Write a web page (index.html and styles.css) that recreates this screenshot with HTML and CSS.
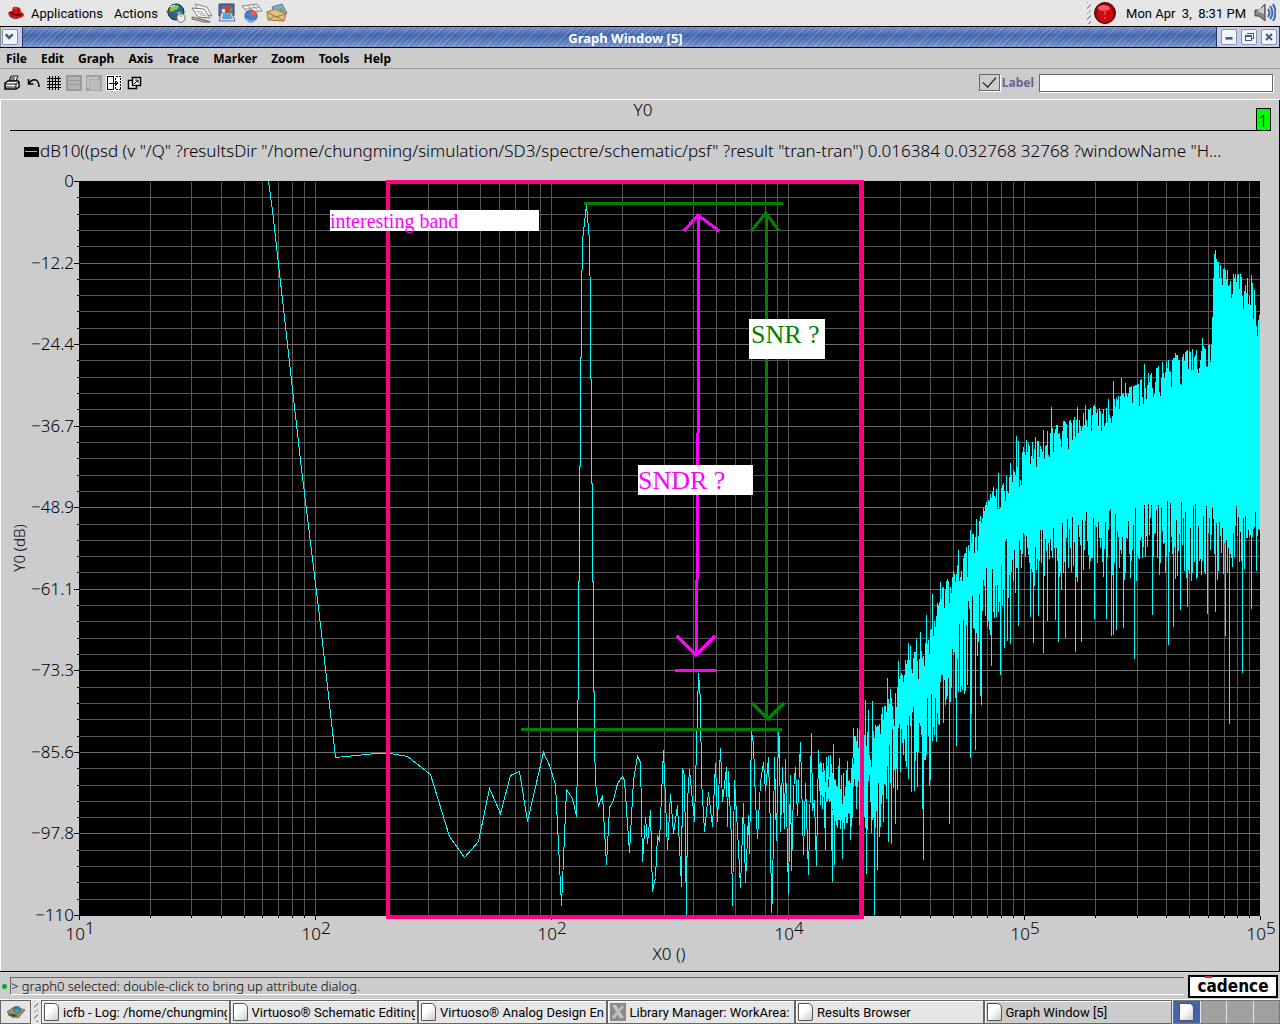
FILE: index.html
```html
<!DOCTYPE html>
<html lang="en">
<head>
<meta charset="utf-8">
<title>Graph Window [5]</title>
<link rel="stylesheet" href="styles.css">
<script src="plot.js" defer></script>
</head>
<body>
<header class="panel">
  <svg class="hat" viewBox="0 0 18 14" aria-hidden="true"><path d="M1 7q1-2 4-2l1-4q3-1 7 1l1 4q3 1 3 3q-1 3-6 3Q3 12 1 7z" fill="#d01010"/><path d="M4 6q4 3 9 2l2 1q-7 2-11-1z" fill="#400"/><path d="M1 8q4 5 12 4l-3 1Q3 13 1 8z" fill="#222"/><path d="M7 2l3 0" stroke="#f66"/></svg>
  <a class="panel-link" href="#apps">Applications</a>
  <a class="panel-link actions" href="#actions">Actions</a>
  <nav class="launchers" aria-label="Launchers">
    <button class="flat" aria-label="Web browser"><svg viewBox="0 0 22 20"><circle cx="10" cy="9" r="8" fill="#2468a8" stroke="#123"/><path d="M6 3q5-2 7 0q-1 4-4 4q-3 3-6 0zM11 9q3-1 5 1q-2 3-4 2z" fill="#8cc63c"/><path d="M4 4l5-2" stroke="#fff"/><path d="M1 8q5 6 11 5" fill="none" stroke="#555" stroke-width="2"/><ellipse cx="15" cy="15" rx="4" ry="4.500" fill="#eee" stroke="#777"/><path d="M15 11v3" stroke="#777"/></svg></button>
    <button class="flat" aria-label="Word processor"><svg viewBox="0 0 22 20"><path d="M4 1l12 3 5 9-12-3z" fill="#f4f4f4" stroke="#888"/><path d="M1 5l12 1 6 9-12-1z" fill="#fff" stroke="#777"/><path d="M5 8l7 1M7 10l7 1M9 12l7 1" stroke="#aaa"/><path d="M1 14l13 3 5 2-6 0L1 16z" fill="#cb8" stroke="#666"/></svg></button>
    <button class="flat" aria-label="Presentation"><svg viewBox="0 0 22 20"><path d="M3 1h15v12H3z" fill="#5868a8" stroke="#345"/><path d="M6 12V6h3v6z" fill="#e8e8e8"/><path d="M10 12V3h3v9z" fill="#e04020"/><path d="M14 12V5h2v7z" fill="#50a040"/><path d="M5 10h11l3 8H3z" fill="#ddd" stroke="#678"/><path d="M7 11h8l1 5H6z" fill="#58a0e0"/></svg></button>
    <button class="flat" aria-label="Spreadsheet"><svg viewBox="0 0 22 20"><path d="M1 3l15-2 5 7-14 2z" fill="#f4f4f4" stroke="#888"/><path d="M4 6l14-2M7 2l5 7M12 2l5 6" stroke="#999"/><circle cx="10" cy="13" r="6" fill="#4a80d0" stroke="#357"/><path d="M10 13V7a6 6 0 0 1 6 5z" fill="#e86030"/><path d="M5 16q4 4 9 1" stroke="#cde" fill="none"/></svg></button>
    <button class="flat" aria-label="Mail"><svg viewBox="0 0 22 20"><path d="M6 4l10-3 5 9-12 3z" fill="#7db0d8" stroke="#678"/><path d="M12 4l6 2-2 4z" fill="#7a5"/><path d="M1 9l8-3 11 5-2 7-16-1z" fill="#e0c088" stroke="#a07830"/><path d="M1 9l9 5 10-3M2 17l7-4 9 5" fill="none" stroke="#a07830"/></svg></button>
  </nav>
  <div class="tray">
    <span class="grip" aria-hidden="true"></span>
    <svg class="alert" viewBox="0 0 22 22" aria-hidden="true"><circle cx="11" cy="11" r="10.500" fill="#a00008" stroke="#500"/><circle cx="11" cy="12" r="8" fill="#c80c10"/><ellipse cx="10" cy="6" rx="6" ry="3" fill="#e86060"/><path d="M11 8v5" stroke="#e33" stroke-width="2"/><circle cx="11" cy="16" r="1" fill="#f44"/></svg>
    <time class="clock">Mon Apr&nbsp; 3,&nbsp; 8:31 PM</time>
    <svg class="volume" viewBox="0 0 22 20" aria-hidden="true"><path d="M1 7h4l6-6v17l-6-5H1z" fill="#888" stroke="#444"/><path d="M3 8l7-5v8z" fill="#ccc"/><path d="M14 6q3 4 0 8M16 3q5 7 0 13M19 1q5 9 0 17" fill="none" stroke="#3a68a8" stroke-width="2"/></svg>
  </div>
</header>

<div class="titlebar">
  <div class="frame-end"><button class="frame-btn" aria-label="Window menu"><svg viewBox="0 0 16 14"><path d="M3 4l4 4 4-4" fill="none" stroke="#4a5a8a" stroke-width="3"/></svg></button></div>
  <h1 class="title">Graph Window [5]</h1>
  <div class="frame-end">
    <button class="frame-btn" aria-label="Minimize"><svg viewBox="0 0 16 14"><path d="M4 7h8v3H4z" fill="#4a5a8a"/></svg></button>
    <button class="frame-btn" aria-label="Restore"><svg viewBox="0 0 14 14" shape-rendering="crispEdges"><path d="M3 5h6v5H3zM5 3h6v5h-2M3 6h6" fill="none" stroke="#4a5a8a"/></svg></button>
    <button class="frame-btn" aria-label="Close"><svg viewBox="0 0 14 14"><path d="M4 4l6 6M10 4l-6 6" stroke="#4a5a8a" stroke-width="2"/></svg></button>
  </div>
</div>

<nav class="menubar" aria-label="Menu">
  <button class="menu">File</button><button class="menu">Edit</button><button class="menu">Graph</button><button class="menu">Axis</button><button class="menu">Trace</button><button class="menu">Marker</button><button class="menu">Zoom</button><button class="menu">Tools</button><button class="menu">Help</button>
</nav>

<div class="toolbar">
  <div class="tools">
    <button class="flat print" aria-label="Print"><svg viewBox="0 0 16 16"><path d="M5 6l2-5h7l-2 5" fill="#fff" stroke="#000"/><path d="M1 8l3-2h10l1 1v5l-3 2H1z" fill="#fff" stroke="#000" stroke-width="1.500"/><path d="M1 9h11l3-2M12 9v5M7 3h4M6 5h5M1 12h11" stroke="#000" fill="none"/><path d="M7 11h3" stroke="#fe0"/></svg></button>
    <button class="flat" aria-label="Undo"><svg viewBox="0 0 16 16"><path d="M2.500 4v5h5M3 8q3-4 7-3q3 2 3 7" fill="none" stroke="#000" stroke-width="1.500"/></svg></button>
    <button class="flat" aria-label="Grid"><svg viewBox="0 0 16 16"><path d="M1 3.500h14M1 6.500h14M1 9.500h14M1 12.500h14M3.500 1v14M6.500 1v14M9.500 1v14M12.500 1v14" stroke="#000" shape-rendering="crispEdges"/></svg></button>
    <button class="flat" aria-label="Strips" disabled><svg viewBox="0 0 16 16" shape-rendering="crispEdges"><path d="M0 0h16v16H0z" fill="#999"/><path d="M2 2h12v3H2zM2 6h12v3H2zM2 10h12v4H2z" fill="#b4b4b4"/></svg></button>
    <button class="flat" aria-label="Cards" disabled><svg viewBox="0 0 16 16" shape-rendering="crispEdges"><path d="M0 0h16v16H0z" fill="#a0a0a0"/><path d="M1 2h11v11H1z" fill="#c4c4c4"/><path d="M3 4h11v11H3z" fill="#bbb" stroke="#aaa"/></svg></button>
    <button class="flat" aria-label="Split"><svg viewBox="0 0 16 16" shape-rendering="crispEdges"><path d="M0 0h16v16H0z" fill="#fff"/><path d="M1.500 1.500h6v13h-6zM3 8h9M10 6l2 2-2 2" fill="none" stroke="#000"/><path d="M9.500 1.500h5v13h-5z" fill="none" stroke="#000" stroke-dasharray="2 1"/></svg></button>
    <button class="flat" aria-label="New window"><svg viewBox="0 0 16 16"><path d="M2.500 5.500h8v8h-8z" fill="#fff" stroke="#000" stroke-width="1.500"/><path d="M6.500 2.500h8v8h-8z" fill="#fff" stroke="#000" stroke-width="1.500"/><path d="M8 9l4-4M9 5h3v3" fill="none" stroke="#000"/></svg></button>
  </div>
  <div class="label-box">
    <input class="tick" type="checkbox" id="lbl" checked>
    <label for="lbl">Label</label>
    <input class="label-text" type="text" aria-label="Label text">
  </div>
</div>

<main class="graph">
  <svg class="chart" viewBox="0 100 1280 871" role="img" aria-label="Power spectral density plot">
    <path class="rule" d="M10 130.500H1256"/>
    <rect class="tab" x="1256.500" y="108.500" width="14" height="22"/>
    <text class="txt" x="1263" y="127" text-anchor="middle">1</text>
    <text class="txt" x="643" y="116" text-anchor="middle">Y0</text>
    <rect x="24" y="147" width="15" height="10"/>
    <path class="trace" d="M25 151.500h12"/>
    <text class="txt" x="40" y="157">dB10((psd (v "/Q" ?resultsDir "/home/chungming/simulation/SD3/spectre/schematic/psf" ?result "tran-tran") 0.016384 0.032768 32768 ?windowName "H...</text>
    <rect x="79" y="181" width="1181" height="735"/>
    <g id="grid"></g>
    <g id="axes"></g>
    <text class="txt" x="669" y="960" text-anchor="middle">X0 ()</text>
    <text class="txt small" transform="translate(25 548) rotate(-90)" text-anchor="middle">Y0 (dB)</text>
    <path id="low" class="trace" d=""/>
    <path id="high" class="trace" d=""/>
    <rect class="band" x="388" y="182" width="474" height="735"/>
    <g class="note green">
      <path d="M584 203.500H783M521 729.500H782M766.500 213V719M751 231L766 213L779 231M752 703L768 719L784 703"/>
      <rect x="749" y="319" width="76" height="40"/>
      <text x="751" y="343">SNR ?</text>
    </g>
    <g class="note magenta">
      <path d="M675 670.500H716M698.500 215V362L696.500 655M684 231L698 215L719 231M677 636L696 655L715 636"/>
      <rect x="638" y="465" width="115" height="30"/>
      <text x="638" y="489">SNDR ?</text>
      <rect x="330" y="210" width="209" height="21"/>
      <text class="band-name" x="330" y="228">interesting band</text>
    </g>
  </svg>
</main>

<div class="status">
  <span class="lamp" aria-hidden="true"></span>
  <output class="message">&gt; graph0 selected: double-click to bring up attribute dialog.</output>
  <svg class="brand" viewBox="0 0 90 24" role="img" aria-label="cadence"><rect x="1" y="2" width="88" height="21" fill="#fff" stroke="#000" stroke-width="2"/><text x="45" y="18" text-anchor="middle">cadence</text><path d="M17 2h7v2h-7z" fill="#e02020"/></svg>
</div>

<footer class="taskbar">
  <button class="desk" aria-label="Show desktop"><svg viewBox="0 0 20 16"><path d="M1 8l7-5 11 3-7 8z" fill="#b09050" stroke="#765"/><circle cx="11" cy="6" r="4" fill="#3878c8"/><path d="M7 9l4-4 3 1-4 5z" fill="#5a4"/><path d="M2 10l6 3 3-2" stroke="#567" stroke-width="2"/></svg></button>
  <span class="grip" aria-hidden="true"></span>
  <div class="tasks">
    <button class="task"><i class="doc"></i><span>icfb - Log: /home/chungming</span></button>
    <button class="task"><i class="doc"></i><span>Virtuoso® Schematic Editing</span></button>
    <button class="task"><i class="doc"></i><span>Virtuoso® Analog Design En</span></button>
    <button class="task"><svg class="x11" viewBox="0 0 16 18" aria-hidden="true"><path d="M0 0h16v18H0z" fill="#8a8a8a"/><path d="M2 2h4l8 13h-4z" fill="#c8c8c8"/><path d="M13 3L3 15" stroke="#c8b8b8" stroke-width="3"/></svg><span>Library Manager: WorkArea:</span></button>
    <button class="task"><i class="doc"></i><span>Results Browser</span></button>
    <button class="task active"><i class="doc"></i><span>Graph Window [5]</span></button>
  </div>
  <div class="pager">
    <button class="desktop current" aria-label="Desktop 1"><i class="doc"></i></button><button class="desktop" aria-label="Desktop 2"></button><button class="desktop" aria-label="Desktop 3"></button><button class="desktop" aria-label="Desktop 4"></button>
  </div>
</footer>
</body>
</html>
```
FILE: styles.css
```css
* { box-sizing: border-box; }
body { margin: 0; min-height: 100vh; display: flex; flex-direction: column; background: #ccc; color: #000; font-family: Roboto, "Liberation Sans", sans-serif; font-size: 13px; }
button { margin: 0; padding: 0; border: 0; background: none; color: inherit; font: inherit; }
svg { display: block; }

.panel { height: 27px; display: flex; align-items: center; padding: 0 4px 0 7px; background: #e6e6e6; border-bottom: 1px solid #000; }
.hat { width: 18px; height: 14px; margin-right: 6px; }
.panel-link { color: #000; text-decoration: none; }
.actions { margin: 0 8px 0 11px; }
.launchers { display: flex; gap: 3px; }
.launchers svg { width: 22px; height: 20px; }
.tray { margin-left: auto; display: flex; align-items: center; }
.grip { width: 4px; height: 22px; margin-right: 3px; background: repeating-linear-gradient(135deg, #999 0 1px, #e6e6e6 1px 4px); }
.alert { width: 22px; height: 22px; margin-right: 10px; }
.clock { margin-right: 8px; }
.volume { width: 22px; height: 20px; }

.titlebar { height: 21px; display: flex; align-items: stretch; border-bottom: 1px solid #000; background: repeating-linear-gradient(135deg, #00003018 0 1px, #ffffff28 1px 2px, transparent 2px 4px), linear-gradient(#7a96d0, #4468ae 40%, #5a7cbc 70%, #7d99cd); }
.frame-end { display: flex; align-items: center; gap: 4px; padding: 0 2px 0 4px; background: #c5cee6; border-right: 1px solid #24376b; border-left: 1px solid #24376b; }
.frame-end:first-child { padding: 0 4px 0 1px; border-left-color: #888; }
.frame-btn { width: 16px; height: 16px; background: #f2f4fb; border: 1px solid #8993b0; border-radius: 2px; }
.frame-btn svg { width: 14px; height: 14px; }
.title { flex: 1; margin: 0; padding-left: 12px; font: bold 13px/22px "Noto Sans", sans-serif; text-align: center; color: #fff; }

.menubar { height: 21px; display: flex; align-items: center; gap: 14px; padding: 1px 6px 0; border-bottom: 1px solid #999; }
.menu { font: bold 12px/20px "Noto Sans", sans-serif; }

.toolbar { height: 30px; display: flex; justify-content: space-between; align-items: center; padding: 0 7px 3px 4px; }
.tools { display: flex; gap: 4px; }
.tools svg { width: 16px; height: 16px; }
.print { margin-right: 2px; }
.label-box { display: flex; align-items: center; color: #669; font: bold 12px/16px "Noto Sans", sans-serif; }
.tick { appearance: none; width: 21px; height: 17px; margin: 0 2px 0 0; border: 1px solid #666; box-shadow: 1px 1px #fff; display: grid; place-items: center; }
.tick:checked::after { content: ""; width: 12px; height: 6px; border: solid #000; border-width: 0 0 1px 1px; transform: translateY(-2px) rotate(-48deg); }
.label-text { width: 234px; height: 18px; margin: 0 0 0 5px; padding: 0 3px; border: 1px solid #666; box-shadow: 1px 1px #fff; background: #fff; }

.graph { border-top: 1px solid #fff; border-bottom: 1px solid #000; box-shadow: inset 1px 0 #fff, inset -1px 0 #000; }
.chart { width: 100%; height: auto; }
.txt { font: 300 17px "Noto Sans", sans-serif; }
.txt.small { font-size: 15px; }
.rule, .axis { stroke: #000; fill: none; shape-rendering: crispEdges; }
.tab { fill: #0f0; stroke: #000; }
.grid-line { stroke: #555; fill: none; shape-rendering: crispEdges; }
.grid-line.major { stroke: #707070; }
.trace { stroke: #0ff; fill: none; shape-rendering: crispEdges; }
.band { fill: none; stroke: #ff0080; stroke-width: 4px; }
.note path { fill: none; stroke-width: 3px; shape-rendering: crispEdges; }
.note rect { fill: #fff; }
.note text { font: 26px "Liberation Serif", serif; }
.note .band-name { font-size: 20px; }
.green path { stroke: #008000; }
.green text { fill: #008000; }
.magenta path { stroke: #f0f; }
.magenta text { fill: #f0f; }

.status { min-height: 27px; flex: 1 0 auto; display: flex; align-items: center; padding: 0 2px; border-top: 1px solid #d8e0d8; }
.lamp { width: 5px; height: 5px; border-radius: 3px; background: #00b020; margin-right: 3px; }
.message { flex: 1; height: 18px; margin-right: 4px; font: 300 13px/16px "Noto Sans", sans-serif; border: solid; border-width: 1px 0 1px 1px; border-color: #666 #fff #fff #666; }
.brand { width: 90px; height: 24px; }
.brand text { font: bold 17px "DejaVu Sans Condensed", sans-serif; }

.taskbar { height: 25px; display: flex; align-items: stretch; background: #e6e6e6; border-top: 1px solid #fff; overflow: hidden; }
.desk { width: 31px; border: 1px solid #666; display: grid; place-items: center; }
.desk svg { width: 20px; height: 16px; }
.taskbar .grip { margin: 1px 3px; height: 21px; }
.tasks { flex: 1; min-width: 0; display: flex; }
.task { flex: 1 1 0; min-width: 0; display: flex; align-items: center; gap: 4px; padding: 0 2px; text-align: left; border: 1px solid #666; box-shadow: inset 1px 1px #fff; }
.task span { overflow: hidden; white-space: nowrap; }
.task.active { background: #ccc; }
.doc { flex: none; width: 15px; height: 18px; border: 1px solid #555; border-radius: 1px 5px 1px 1px; background: linear-gradient(135deg, #fff 40%, #ccc); }
.x11 { flex: none; width: 16px; height: 18px; }
.pager { width: 107px; margin-left: 1px; display: flex; gap: 1px; border: 1px solid #777; background: #e6e6e6; }
.desktop { flex: 1; background: #a0a0a0; display: grid; place-items: center; }
.current { background: #4464a8; }
```
FILE: plot.js
```javascript
const NS = "http://www.w3.org/2000/svg";
const left = 79, right = 1260, top0 = 181, bottom = 915;
const add = (parent, name, attrs, text) => {
  const el = document.createElementNS(NS, name);
  for (const k in attrs) el.setAttribute(k, attrs[k]);
  if (text) el.textContent = text;
  document.getElementById(parent).append(el);
  return el;
};

// Horizontal grid: nine major divisions, five minor steps in each.
const yNames = ["0", "−12.2", "−24.4", "−36.7", "−48.9", "−61.1", "−73.3", "−85.6", "−97.8", "−110"];
let minor = "", major = "", ticks = "M79.5 181V916M79 915.5H1260";
for (let i = 0; i <= 45; i++) {
  const y = Math.round(top0 + (bottom - top0) * i / 45) + 0.5;
  const isMajor = i % 5 === 0;
  if (i > 0 && i < 45) {
    if (isMajor) major += `M80 ${y}H${right}`; else minor += `M80 ${y}H${right}`;
  }
  ticks += `M${isMajor ? 74 : 77} ${y}H79`;
  if (isMajor) add("axes", "text", { class: "txt", x: 74, y: y + 5.5, "text-anchor": "end" }, yNames[i / 5]);
}
// Vertical grid: five decades on a log scale.
const powers = ["1", "2", "2", "4", "5", "5"];
const decade = 236.35;
for (let d = 0; d <= 5; d++) {
  for (let m = 1; m < (d < 5 ? 10 : 2); m++) {
    const x = Math.floor(left + decade * (d + Math.log10(m))) + 0.5;
    if (x > 80 && x < 1260) minor += `M${x} ${top0 + 1}V${bottom}`;
    ticks += `M${x} 916V${m === 1 ? 920 : 918}`;
    if (m === 1) {
      const label = add("axes", "text", { class: "txt", x: x - 14, y: 940 }, "10");
      const sup = document.createElementNS(NS, "tspan");
      sup.setAttribute("dy", -6);
      sup.textContent = powers[d];
      label.append(sup);
    }
  }
}
add("grid", "path", { class: "grid-line", d: minor });
add("grid", "path", { class: "grid-line major", d: major });
add("axes", "path", { class: "axis", d: ticks });

// Spectrum below the noise-shaped region.
const low = [268,181,272,210,300,460,320,624,335,757,376,753,390,753,407,756,430,774,449,836,464,857,478,841,489,788,500,813,510,775,519,771,527,821,543,752,549,765,555,784,561,905,566,789,572,798,576,816,577,758,578,645,579,520,580,415,581,301,582,240,586,204,589,240,590,310,591,445,592,520,593,640,594,740,595,783,598,806,602,795,606,864,609,807,613,800,617,783,622,776,624,780,629,852,633,780,637,756,640,762,642,861,645,817,647,843,650,810,652,891,655,877,657,835,659,841,663,750,667,849,670,794,673,833,677,805,681,886,682,768,684,775,686,915,687,800,689,769,694,821,698,673,700,700,701,780,704,831,708,792,712,826,715,763,717,821,720,748,722,801,726,767,727,826,728,771,731,840,732,905,734,780,737,830,740,887,743,803,745,882,748,815,749,853,751,731,753,744,755,800,757,838,760,782,763,762,765,790,768,757,770,830,771,912,772,895,774,757,776,840,778,732,779,738,780,831,782,767,784,828,785,759,788,893,790,775,791,870,793,790,795,767,797,815,800,742,803,854,805,783,808,874,811,733,812,810,814,800,816,865,818,750,820,804,821,763,822,808,823,763,824,805,825,849,826,757,827,800,828,756,829,800,830,755,832,881,833,744,834,864,835,780,836,824,838,774,839,758,840,828,841,775,842,858,843,773,844,828,846,778,847,761,848,810,849,780,850,839,852,790,853,728,855,780,857,728,858,770,859,730,860,770,861,760];
let d = "";
for (let i = 0; i < low.length; i += 2) d += `${i ? "L" : "M"}${low[i] + 0.5} ${low[i + 1] + 0.5}`;
document.getElementById("low").setAttribute("d", d);

// Noise-shaped region: one vertical stroke for each column, between two envelopes.
const lookup = (pts, x) => {
  let i = 0;
  while (i < pts.length - 4 && pts[i + 2] < x) i += 2;
  const t = (x - pts[i]) / (pts[i + 2] - pts[i]);
  return pts[i + 1] + (pts[i + 3] - pts[i + 1]) * Math.max(0, Math.min(1, t));
};
let seed = 7;
const rand = () => (seed = (seed * 16807) % 2147483647) / 2147483647;
const upper = [820,768,831,768,835,790,850,785,853,742,862,740,872,735,882,710,895,698,905,665,915,657,925,640,932,625,940,595,950,580,958,568,970,545,980,520,990,500,1000,487,1010,475,1017,465,1020,485,1022,453,1030,446,1040,440,1060,428,1080,420,1100,407,1120,401,1140,384,1160,371,1180,358,1200,353,1211,350,1213,280,1215,255,1218,267,1225,275,1240,280,1250,285,1254,300,1257,330,1259,318];
const inner = [820,788,831,795,835,815,850,810,853,775,862,775,880,770,890,725,905,715,925,695,945,670,960,610,980,580,1000,540,1020,530,1035,530,1060,520,1090,510,1140,505,1190,496,1225,500,1259,512];
const outer = [820,800,831,803,835,830,850,825,853,820,862,835,880,835,900,775,925,760,945,720,960,710,980,650,1000,620,1020,590,1040,585,1100,580,1160,585,1220,585,1259,560];
const peaks = {865:700,868:710,872:701,887:678,890:689,898:661,908:643,910:646,916:639,920:632,926:615,932:594,940:582,943:587,952:577,958:550,964:554,970:530,976:519,979:521,985:505,987:506,993:487,998:473,1002:485,1010:463,1016:436,1018:441,1026:440,1043:430,1051:407,1057:425,1077:407,1085:405,1113:381,1121:378,1125:383,1144:364,1162:362,1175:353,1187:350,1202:338,1203:346,1213:278,1214:254,1215:250,1216:259,1217:262,1223:269,1235:274,1251:275,1252:283,1253:319,1254:290,1255:305,1256:326,1257:336,1258:320,1259:315};
const nulls = {865:828,866:874,870:802,871:833,874:915,877:870,879:837,881:804,888:842,891:844,893:788,895:824,897:790,908:779,911:792,914:791,917:787,922:809,923:860,925:760,929:786,930:780,936:742,943:723,949:824,956:746,964:694,970:758,971:714,975:750,980:696,981:705,991:666,1000:675,1004:648,1007:641,1010:644,1018:626,1030:617,1033:643,1038:616,1043:653,1047:621,1055:620,1058:642,1061:590,1065:638,1075:652,1081:642,1094:619,1106:619,1111:636,1113:635,1116:630,1123:628,1134:659,1152:615,1168:645,1173:627,1180:610,1187:607,1207:614,1215:612,1225:636,1229:724,1242:673,1251:609,1256:571};
d = "";
for (let x = 820; x < 1260; x++) {
  const hi = peaks[x] || lookup(upper, x) + rand() * rand() * 40 - 6;
  const a = lookup(inner, x), b = lookup(outer, x);
  const lo = nulls[x] || a + (b - a) * rand();
  d += `M${x + 0.5} ${Math.round(hi)}V${Math.round(Math.max(lo, hi + 6))}`;
}
document.getElementById("high").setAttribute("d", d);
```
